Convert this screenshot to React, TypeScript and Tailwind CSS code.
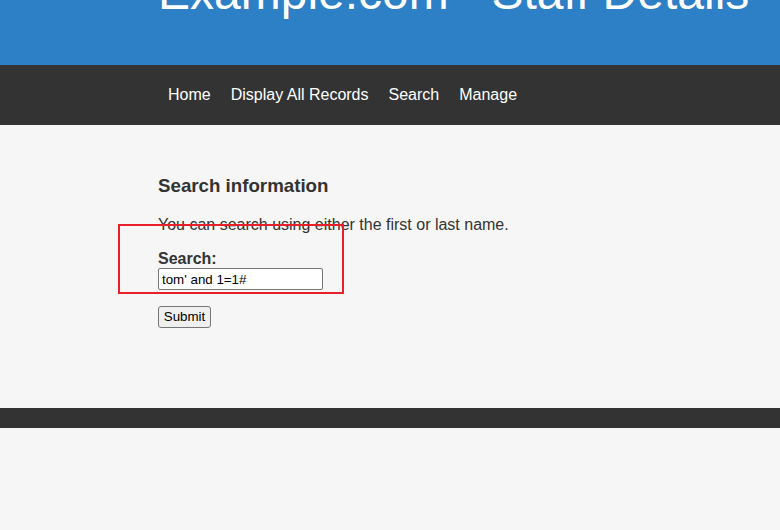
const navItems = ['Home', 'Display All Records', 'Search', 'Manage'];

export default function App() {
  return (
    <div className="relative min-h-[530px] w-[780px] overflow-hidden bg-[#f6f6f6] font-['Liberation_Sans',Arial,sans-serif] text-[#333]">
      {/* Header (page is scrolled, so the title is cut at the top) */}
      <header className="h-[65px] overflow-hidden bg-[#2d7fc6]">
        <h1 className="mt-[-35px] whitespace-nowrap pl-[158px] text-[48px] font-normal leading-[55px] text-white">
          Example.com - Staff Details
        </h1>
      </header>

      {/* Nav */}
      <nav className="flex h-[60px] items-center bg-[#333] pl-[158px]">
        {navItems.map((item) => (
          <a key={item} className="px-[10px] text-[16px] leading-[18px] text-white">
            {item}
          </a>
        ))}
      </nav>

      {/* Content */}
      <main className="h-[283px] pl-[158px] pt-[50px]">
        <h3 className="text-[18.72px] font-bold leading-[22px]">Search information</h3>
        <p className="mt-[19px] text-[16px] leading-[18px]">
          You can search using either the first or last name.
        </p>
        <form className="mt-[16px] flex flex-col items-start">
          <label className="text-[16px] font-bold leading-[18px]">Search:</label>
          <input
            readOnly
            value="tom' and 1=1#"
            className="h-[22px] w-[165px] rounded-[2px] border border-[#767676] bg-white px-[3px] text-[13.33px] text-black outline-none"
          />
          <button
            type="button"
            className="mt-[16px] h-[22px] w-[53px] rounded-[3px] border border-[#767676] bg-[#efefef] text-[13.33px] leading-[16px] text-black"
          >
            Submit
          </button>
        </form>
      </main>

      {/* Footer */}
      <footer className="h-[20px] bg-[#333]" />

      {/* Annotation box */}
      <div className="absolute left-[118px] top-[224px] h-[70px] w-[226px] border-2 border-[#e8202a]" />
    </div>
  );
}
